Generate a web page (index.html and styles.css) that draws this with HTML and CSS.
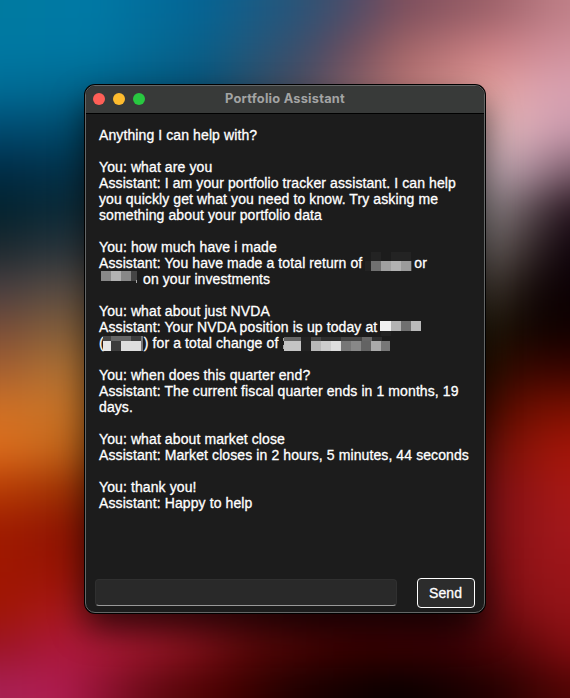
FILE: index.html
```html
<!DOCTYPE html>
<html lang="en">
<head>
<meta charset="utf-8">
<title>Portfolio Assistant</title>
<link rel="stylesheet" href="styles.css">
</head>
<body>
<div class="backdrop"><div class="wallpaper">
<i class="band b0"></i><i class="band b1"></i><i class="band b2"></i><i class="band b3"></i><i class="band b4"></i><i class="band b5"></i><i class="band b6"></i><i class="band b7"></i><i class="band b8"></i><i class="band b9"></i><i class="band b10"></i><i class="band b11"></i><i class="band b12"></i><i class="band b13"></i><i class="band b14"></i><i class="band b15"></i><i class="band b16"></i><i class="band b17"></i><i class="band b18"></i><i class="band b19"></i>
</div></div>
<main class="window">
<header class="titlebar">
<div class="lights"><span class="light close"></span><span class="light minimize"></span><span class="light expand"></span></div>
<h1>Portfolio Assistant</h1>
</header>
<section class="log">
<div class="entry"><p>Anything I can help with?</p></div>
<div class="entry"><p>You: what are you</p><p>Assistant: I am your portfolio tracker assistant. I can help</p><p>you quickly get what you need to know. Try asking me</p><p>something about your portfolio data</p></div>
<div class="entry"><p>You: how much have i made</p><p>Assistant: You have made a total return of <svg class="mosaic return" width="48" height="20" viewBox="0 0 48 20" shape-rendering="crispEdges"><path fill="#232323" d="M0 9h6v10H0zM6 0h10v9H6zM26 0h20v9H26z"/><path fill="#707070" d="M6 9h10v10H6z"/><path fill="#a0a0a0" d="M16 9h10v10H16z"/><path fill="#b2b2b2" d="M26 9h10v10H26z"/><path fill="#9b9b9b" d="M36 9h10v10H36z"/><path fill="#444" d="M46 9h1v10h-1z"/></svg>or</p><p><svg class="mosaic percent" width="44" height="12" viewBox="0 0 44 12" shape-rendering="crispEdges"><path fill="#888" d="M2 0h10v10H2zM22 0h10v10H22z"/><path fill="#b2b2b2" d="M12 0h10v10H12z"/><path fill="#454545" d="M32 0h6v10h-6z"/><path fill="#aaa" d="M37 9h1v3h-1z"/></svg>on your investments</p></div>
<div class="entry"><p>You: what about just NVDA</p><p>Assistant: Your NVDA position is up today at <svg class="mosaic gain" width="43" height="15" viewBox="0 0 43 15" shape-rendering="crispEdges"><path fill="#f0f0f0" d="M0 0h11v10H0z"/><path fill="#b4b4b4" d="M11 0h10v10H11z"/><path fill="#707070" d="M21 0h10v10H21z"/><path fill="#bababa" d="M31 0h10v10H31z"/><path fill="#222" d="M1 10h10v5H1z"/></svg></p><p>(<svg class="mosaic share" width="41" height="15" viewBox="0 0 41 15" shape-rendering="crispEdges"><path fill="#454545" d="M0 0h8v5H0z"/><path fill="#666" d="M8 0h20v5H8z"/><path fill="#e6e6e6" d="M0 5h8v10H0z"/><path fill="#3c3c3c" d="M8 5h10v10H8zM28 0h10v5H28z"/><path fill="#ddd" d="M18 5h20v10H18z"/><path fill="#777" d="M38 0h2v15h-2z"/></svg>) for a total change of <svg class="mosaic change" width="108" height="15" viewBox="0 0 108 15" shape-rendering="crispEdges"><path fill="#aaa" d="M0 1h1v3H0zM0 8h1v4H0z"/><path fill="#666" d="M1 0h17v4H1zM79 0h10v4H79z"/><path fill="#c4c4c4" d="M1 4h17v10H1z"/><path fill="#222" d="M18 0h10v14H18z"/><path fill="#444" d="M28 0h10v4H28zM58 0h21v4H58z"/><path fill="#2e2e2e" d="M38 0h20v4H38zM89 0h10v4H89z"/><path fill="#b8b8b8" d="M28 4h10v10H28z"/><path fill="#ccc" d="M38 4h10v10H38z"/><path fill="#ddd" d="M48 4h10v10H48z"/><path fill="#777" d="M58 4h10v10H58zM98 4h9v10h-9z"/><path fill="#888" d="M68 4h10v10H68z"/><path fill="#636363" d="M78 4h10v10H78z"/><path fill="#aaa" d="M88 4h10v10H88z"/></svg></p></div>
<div class="entry"><p>You: when does this quarter end?</p><p>Assistant: The current fiscal quarter ends in 1 months, 19</p><p>days.</p></div>
<div class="entry"><p>You: what about market close</p><p>Assistant: Market closes in 2 hours, 5 minutes, 44 seconds</p></div>
<div class="entry"><p>You: thank you!</p><p>Assistant: Happy to help</p></div>
</section>
<form class="composer">
<input class="field" type="text" aria-label="Message">
<button class="send" type="button">Send</button>
</form>
</main>
</body>
</html>
```
FILE: styles.css
```css
* { box-sizing: border-box; }
html { overflow: hidden; }
body {
  margin: 0;
  width: 570px;
  height: 698px;
  overflow: hidden;
  display: flex;
  align-items: flex-start;
  justify-content: center;
  padding-top: 85px;
  background: #200508;
  font-family: "Liberation Sans", Arial, sans-serif;
}
.backdrop {
  position: absolute;
  inset: 0;
  overflow: hidden;
  contain: strict;
}
/* Soft colour field: 40px bands, bled past the edges and blurred together */
.wallpaper {
  position: absolute;
  inset: -50px;
  filter: blur(18px);
  display: flex;
  flex-direction: column;
}
.band { flex: 1; }
.b0, .b1 { background: linear-gradient(90deg, #007aa0 50px, #0079a5 140px, #046494 250px, #2a5478 350px, #4c4c68 400px, #7c4e5c 450px, #9c6068 540px, #c08088 615px); }
.b2 { background: linear-gradient(90deg, #0078a2 50px, #0077a2 140px, #08608a 250px, #3a4e6c 350px, #6c4c5c 400px, #a06466 450px, #cc8084 540px, #d0909c 615px); }
.b3 { background: linear-gradient(90deg, #006c96 50px, #006890 120px, #064f74 250px, #4c4a5c 350px, #b87474 450px, #e4a09c 540px, #dca4b0 590px, #d8a0b0 615px); }
.b4 { background: linear-gradient(90deg, #004a70 50px, #004a6c 110px, #003850 250px, #b08080 450px, #d4b0b0 540px, #dcacb8 580px, #c898ac 615px); }
.b5 { background: linear-gradient(90deg, #002c46 50px, #02324c 110px, #102830 250px, #a08888 450px, #b8a4ac 540px, #b090a0 580px, #806070 615px); }
.b6 { background: linear-gradient(90deg, #02222e 50px, #0a2a38 110px, #1a2c34 250px, #888 450px, #8c8486 540px, #5c4c52 580px, #281620 615px); }
.b7 { background: linear-gradient(90deg, #1c282e 50px, #28343c 110px, #303030 250px, #605c5c 450px, #6c6462 540px, #342828 580px, #10040c 615px); }
.b8 { background: linear-gradient(90deg, #483e40 50px, #584c44 110px, #504438 250px, #484038 450px, #403830 540px, #140a08 580px, #0c0004 615px); }
.b9 { background: linear-gradient(90deg, #784c38 50px, #84603c 110px, #70502c 250px, #282010 450px, #201808 540px, #100400 580px, #100000 615px); }
.b10 { background: linear-gradient(90deg, #a45e30 50px, #b07234 110px, #805020 250px, #281400 450px, #240e00 540px, #380600 580px, #380400 615px); }
.b11 { background: linear-gradient(90deg, #d07024 50px, #c87428 110px, #805018 250px, #301000 450px, #440a00 540px, #700e00 580px, #7c1000 615px); }
.b12 { background: linear-gradient(90deg, #dc6c1c 50px, #c4681c 110px, #703000 250px, #500c00 450px, #681008 540px, #901408 580px, #a41408 615px); }
.b13 { background: linear-gradient(90deg, #b83c04 50px, #a03404 110px, #601000 250px, #600c08 450px, #781014 540px, #941414 580px, #a81814 615px); }
.b14 { background: linear-gradient(90deg, #a01c00 50px, #901604 110px, #500800 250px, #600c10 450px, #781014 540px, #941418 580px, #a4181c 615px); }
.b15 { background: linear-gradient(90deg, #a01600 50px, #981404 110px, #500808 250px, #380408 450px, #700c10 540px, #941418 580px, #9c1418 615px); }
.b16 { background: linear-gradient(90deg, #a01604 50px, #a81818 110px, #901420 160px, #700c14 250px, #400408 350px, #380408 500px, #600c10 540px, #881014 580px, #941418 615px); }
.b17 { background: linear-gradient(90deg, #9c1424 50px, #ac183c 110px, #a81834 160px, #8c1420 230px, #580808 300px, #380000 400px, #380004 500px, #580608 570px, #840c10 615px); }
.b18, .b19 { background: linear-gradient(90deg, #a82054 50px, #b01c50 110px, #88102c 160px, #600810 210px, #480000 270px, #1c0000 350px, #080000 450px, #200000 540px, #500404 615px); }
.window {
  position: relative;
  width: 400px;
  height: 528px;
  border: 1px solid #646666;
  border-radius: 10px;
  background: #1c1c1c;
  box-shadow: 0 0 0 1px #000, 0 16px 32px rgba(0, 0, 0, .6);
  overflow: hidden;
  display: flex;
  flex-direction: column;
}
.titlebar {
  height: 28px;
  flex: none;
  display: grid;
  grid-template-columns: 80px 1fr 80px;
  align-items: center;
  background: #383a39;
  border-bottom: 1px solid #000;
}
.titlebar h1 {
  margin: -1px 0 0;
  font: 700 12.8px/16px Inter, sans-serif;
  letter-spacing: .23px;
  text-align: center;
  white-space: nowrap;
  color: #a3a4a4;
}
.lights { display: flex; gap: 8px; padding-left: 7px; margin-top: -1px; }
.light { width: 12px; height: 12px; border-radius: 50%; }
.close { background: #ff5f57; }
.minimize { background: #febc2e; }
.expand { background: #28c840; }
.log {
  flex: 1;
  padding: 13px 0 0 13px;
  color: #fff;
  font-size: 14px;
  line-height: 16px;
  letter-spacing: .1px;
  -webkit-text-stroke: .3px #fff;
}
.entry { margin-bottom: 16px; }
.entry p { margin: 0; height: 16px; white-space: nowrap; }
.mosaic { vertical-align: top; }
.return { margin: -3px 1px 0 -1px; }
.gain { margin: 2px 0 0 -1px; }
.share { margin: 1px 0 0 -1px; }
.change { margin: 2px 0 0 1px; }
.composer {
  display: flex;
  align-items: flex-start;
  justify-content: space-between;
  margin: 0;
  padding: 0 9px 4px;
}
.field {
  width: 302px;
  height: 27px;
  margin-top: 1px;
  border: 1px solid #303030;
  border-bottom-color: #999;
  border-radius: 4px;
  background: #292929;
}
.send {
  width: 58px;
  height: 30px;
  padding: 0 1px 0 0;
  border: 1px solid #fff;
  border-radius: 4px;
  background: #2c2c2c;
  color: #fff;
  font: 14px/16px "Liberation Sans", Arial, sans-serif;
  letter-spacing: .1px;
  -webkit-text-stroke: .3px #fff;
}
```
